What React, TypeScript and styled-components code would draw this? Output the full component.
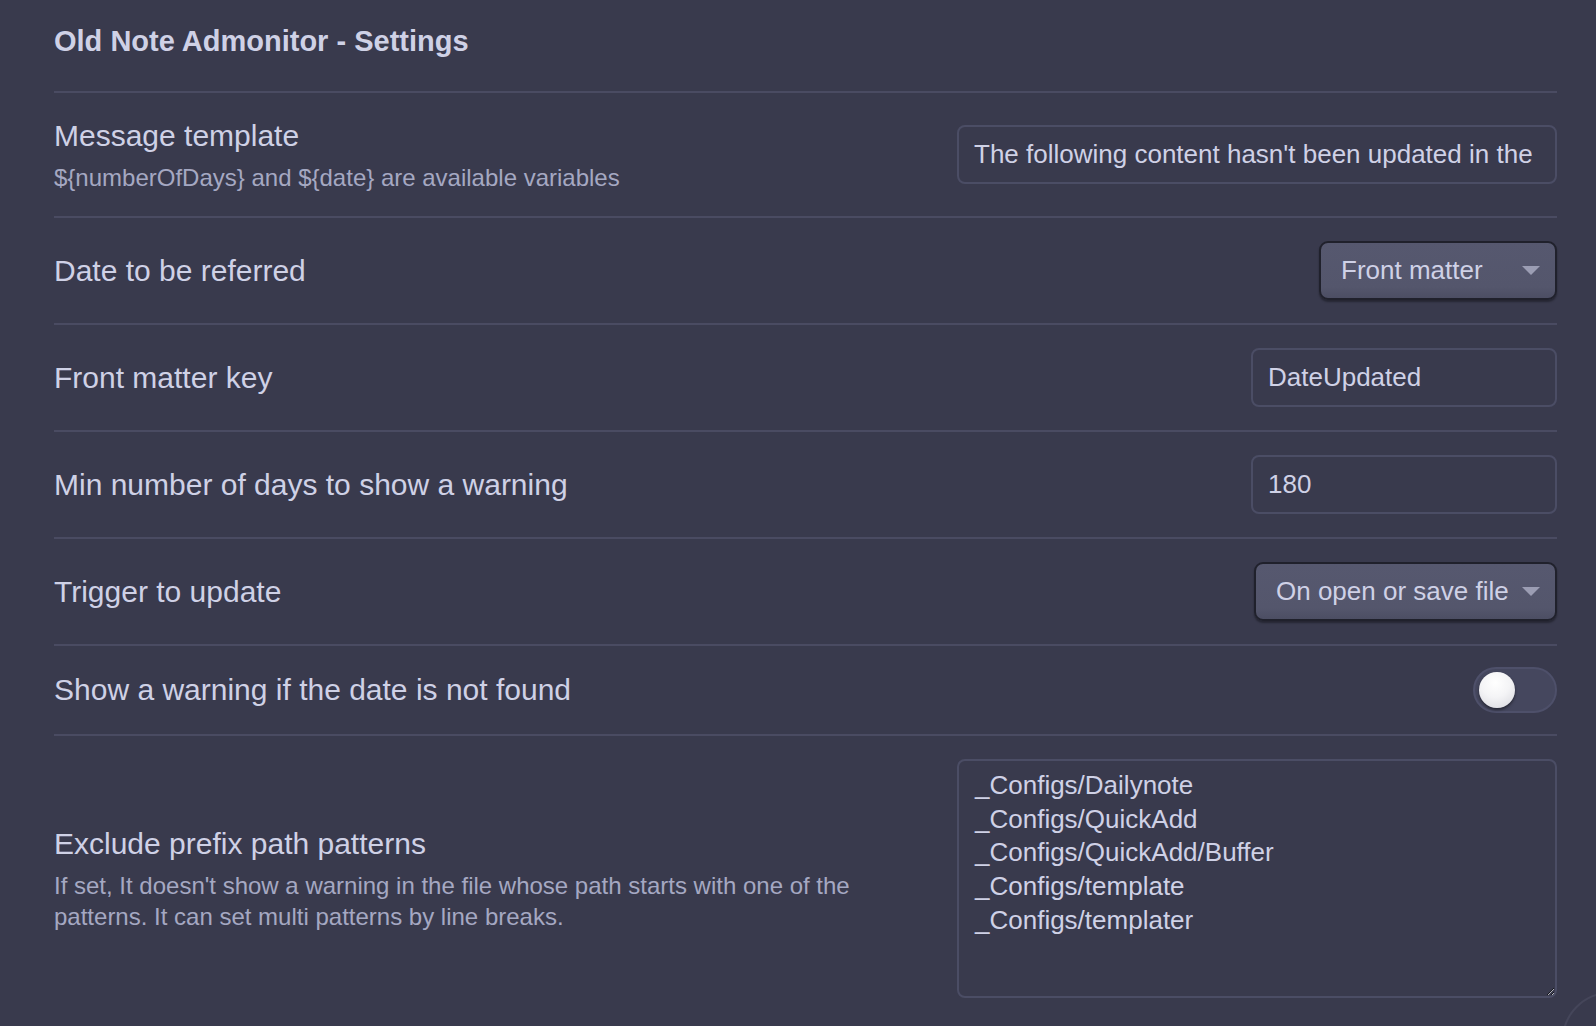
import styled, { createGlobalStyle } from "styled-components";

const GlobalStyle = createGlobalStyle`
  html, body {
    margin: 0;
    padding: 0;
    background: #393a4d;
    overflow: hidden;
  }

  body {
    font-family: "Liberation Sans", Arial, sans-serif;
    color: #cfd1e6;
  }

  #root {
    min-height: 100vh;
  }
`;

const Page = styled.div`
  padding: 0 39px 0 54px;
`;

const Heading = styled.div`
  padding: 23px 0 30px;
  font-size: 29px;
  font-weight: 700;
  line-height: 1.3;
  color: #cfd1e6;
`;

const Row = styled.div<{ $tight?: boolean }>`
  display: flex;
  align-items: center;
  padding: ${(p) => (p.$tight ? "21px 0" : "23px 0")};
  border-top: 2px solid #4a4b62;
`;

const Info = styled.div`
  flex: 1 1 auto;
  min-width: 0;
  margin-right: 30px;
`;

const Name = styled.div`
  font-size: 30px;
  line-height: 1.3;
  color: #cfd1e6;
`;

const Description = styled.div`
  padding-top: 7px;
  font-size: 24px;
  line-height: 1.3;
  color: #a5a8c2;
`;

const Control = styled.div`
  flex: 0 0 auto;
  display: flex;
  justify-content: flex-end;
  align-items: center;
`;

const TextInput = styled.input<{ $width: number }>`
  box-sizing: border-box;
  width: ${(p) => p.$width}px;
  height: 59px;
  padding: 0 15px;
  border: 2px solid #4b4d65;
  border-radius: 8px;
  background: #393a4d;
  color: #cfd1e6;
  font-family: "Liberation Sans", Arial, sans-serif;
  font-size: 26px;
  outline: none;
`;

const TextArea = styled.textarea`
  box-sizing: border-box;
  width: 600px;
  height: 239px;
  padding: 8px 16px 7px;
  border: 2px solid #4b4d65;
  border-radius: 8px;
  background: #393a4d;
  color: #cfd1e6;
  color-scheme: dark;
  font-family: "Liberation Sans", Arial, sans-serif;
  font-size: 26px;
  line-height: 1.3;
  outline: none;
  resize: both;
  overflow: hidden;
`;

const Dropdown = styled.div<{ $width: number }>`
  box-sizing: border-box;
  width: ${(p) => p.$width}px;
  height: 59px;
  display: flex;
  align-items: center;
  justify-content: space-between;
  padding: 0 15px 0 20px;
  border: 2px solid #20212c;
  border-radius: 9px;
  background: linear-gradient(180deg, #56586f 0%, #54566c 80%, #4c4e63 100%);
  box-shadow: 0 2px 2px rgba(0, 0, 0, 0.35);
  color: #cfd1e6;
  font-size: 26px;
`;

const Arrow = styled.span`
  width: 0;
  height: 0;
  border-left: 9px solid transparent;
  border-right: 9px solid transparent;
  border-top: 9px solid #9b9db3;
`;

const Toggle = styled.div`
  box-sizing: border-box;
  width: 84px;
  height: 46px;
  display: flex;
  align-items: center;
  padding-left: 4px;
  border: 2px solid #4e506a;
  border-radius: 23px;
  background: #45475e;
`;

const Knob = styled.div`
  width: 36px;
  height: 36px;
  border-radius: 50%;
  background: radial-gradient(circle at 45% 30%, #ffffff 0%, #f4f4f6 45%, #d6d6dc 100%);
  box-shadow: 0 2px 3px rgba(0, 0, 0, 0.45);
`;

const HelpRing = styled.div`
  position: fixed;
  right: -62px;
  bottom: -62px;
  width: 96px;
  height: 96px;
  border-radius: 50%;
  border: 2px solid #45465a;
  box-sizing: border-box;
`;

const excludes = [
  "_Configs/Dailynote",
  "_Configs/QuickAdd",
  "_Configs/QuickAdd/Buffer",
  "_Configs/template",
  "_Configs/templater",
].join("\n");

export default function App() {
  return (
    <>
      <GlobalStyle />
      <Page>
        <Heading>Old Note Admonitor - Settings</Heading>

        <Row>
          <Info>
            <Name>Message template</Name>
            <Description>
              {"${numberOfDays} and ${date} are available variables"}
            </Description>
          </Info>
          <Control>
            <TextInput
              $width={600}
              defaultValue={
                "The following content hasn't been updated in the last ${numberOfDays} days"
              }
            />
          </Control>
        </Row>

        <Row>
          <Info>
            <Name>Date to be referred</Name>
          </Info>
          <Control>
            <Dropdown $width={238}>
              <span>Front matter</span>
              <Arrow />
            </Dropdown>
          </Control>
        </Row>

        <Row>
          <Info>
            <Name>Front matter key</Name>
          </Info>
          <Control>
            <TextInput $width={306} defaultValue="DateUpdated" />
          </Control>
        </Row>

        <Row>
          <Info>
            <Name>Min number of days to show a warning</Name>
          </Info>
          <Control>
            <TextInput $width={306} defaultValue="180" />
          </Control>
        </Row>

        <Row>
          <Info>
            <Name>Trigger to update</Name>
          </Info>
          <Control>
            <Dropdown $width={303}>
              <span>On open or save file</span>
              <Arrow />
            </Dropdown>
          </Control>
        </Row>

        <Row $tight>
          <Info>
            <Name>Show a warning if the date is not found</Name>
          </Info>
          <Control>
            <Toggle>
              <Knob />
            </Toggle>
          </Control>
        </Row>

        <Row>
          <Info>
            <Name>Exclude prefix path patterns</Name>
            <Description>
              If set, It doesn't show a warning in the file whose path starts
              with one of the patterns. It can set multi patterns by line
              breaks.
            </Description>
          </Info>
          <Control>
            <TextArea defaultValue={excludes} />
          </Control>
        </Row>
      </Page>
      <HelpRing />
    </>
  );
}
